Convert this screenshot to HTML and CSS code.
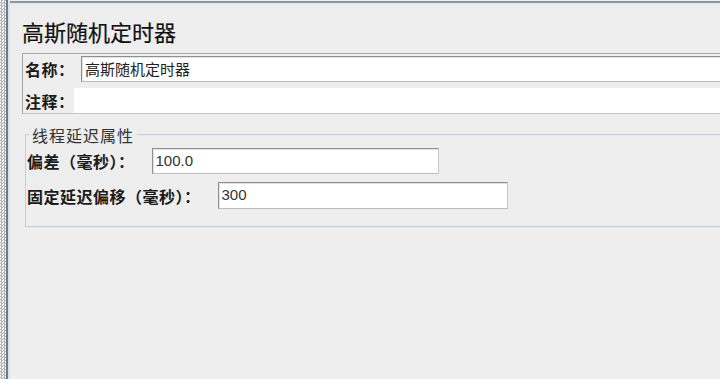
FILE: index.html
```html
<!DOCTYPE html>
<html lang="zh">
<head>
<meta charset="utf-8">
<title>高斯随机定时器</title>
<link rel="stylesheet" href="styles.css">
</head>
<body>
<div class="frame">
  <div class="dots"></div>
  <div class="vline"></div>
  <div class="main">
    <h1 class="title">高斯随机定时器</h1>
    <div class="namebox">
      <div class="row">
        <span class="label label-name">名称：</span>
        <div class="field field-wide">高斯随机定时器</div>
      </div>
      <div class="row row-comment">
        <span class="label label-comment">注释：</span>
        <div class="field field-wide field-comment"></div>
      </div>
    </div>
    <fieldset class="group">
      <legend class="legend">线程延迟属性</legend>
      <div class="grow">
        <span class="label">偏差（毫秒）：</span>
        <div class="field field-num field-dev">100.0</div>
      </div>
      <div class="grow grow-2">
        <span class="label">固定延迟偏移（毫秒）：</span>
        <div class="field field-num field-off">300</div>
      </div>
    </fieldset>
  </div>
</div>
</body>
</html>
```
FILE: styles.css
```css
html, body {
  margin: 0;
  padding: 0;
  height: 100%;
  overflow: hidden;
  background: #eeeeee;
}
body {
  font-family: "Noto Sans CJK SC", "Liberation Sans", sans-serif;
  color: #1c1c1c;
}
.frame {
  display: flex;
  height: 100%;
}
.dots {
  flex: none;
  width: 6px;
  background-color: #f2f2f2;
  background-image: repeating-conic-gradient(#b5b5b5 0 25%, #f4f4f4 0 50%);
  background-size: 3px 3px;
}
.vline {
  flex: none;
  width: 2px;
  background: #6f7a86;
  border-right: 2px solid #dbe4ee;
}
.main {
  flex: 1;
  min-width: 0;
  margin-top: 1px;
  border-top: 2px solid #8e959d;
  box-shadow: inset 0 2px 0 #e1e9f2;
  padding: 14px 0 0 12px;
}
.title {
  margin: 0;
  font-size: 22px;
  font-weight: normal;
  line-height: 28px;
  color: #111;
  -webkit-text-stroke: 0.2px #111;
}
.namebox {
  margin-top: 8px;
  margin-right: -10px;
  border: 1px solid #a6a6a6;
  border-bottom-color: #c4c4c4;
  padding: 2px 0 0 2px;
}
.row {
  display: flex;
  align-items: center;
}
.row-comment {
  margin-top: 6px;
}
.label {
  flex: none;
  white-space: nowrap;
  font-size: 16px;
  font-weight: bold;
  line-height: 20px;
  letter-spacing: 0.5px;
  color: #1a1a1a;
}
.label-name {
  width: 56px;
}
.label-comment {
  width: 49px;
}
.field {
  box-sizing: border-box;
  height: 26px;
  background: #ffffff;
  border: 1px solid #8f8f8f;
  border-right-color: #c9c9c9;
  border-bottom-color: #bdbdbd;
  box-shadow: inset 1px 1px 0 #e2e2e2;
  padding: 0 3px;
  font-size: 15px;
  line-height: 24px;
  color: #222;
}
.field-wide {
  flex: 1;
}
.field-comment {
  height: 25px;
  border: none;
  box-shadow: none;
}
.group {
  margin: 9px 0 0 3px;
  margin-right: -10px;
  padding: 3px 0 17px 1px;
  border: 1px solid #c3cedb;
  box-shadow: 0 1px 0 #e3ebf4, inset 0 1px 0 #e3ebf4;
}
.legend {
  padding: 2px 3px 0;
  margin-left: 2px;
  font-size: 16px;
  line-height: 20px;
  letter-spacing: 1px;
  color: #333;
}
.grow {
  display: flex;
  align-items: center;
  gap: 17px;
}
.grow-2 {
  margin-top: 8px;
}
.field-num {
  font-family: "Liberation Sans", Arial, sans-serif;
  color: #333;
  font-size: 15px;
}
.field-dev {
  width: 287px;
}
.field-off {
  width: 290px;
  height: 27px;
}
```
